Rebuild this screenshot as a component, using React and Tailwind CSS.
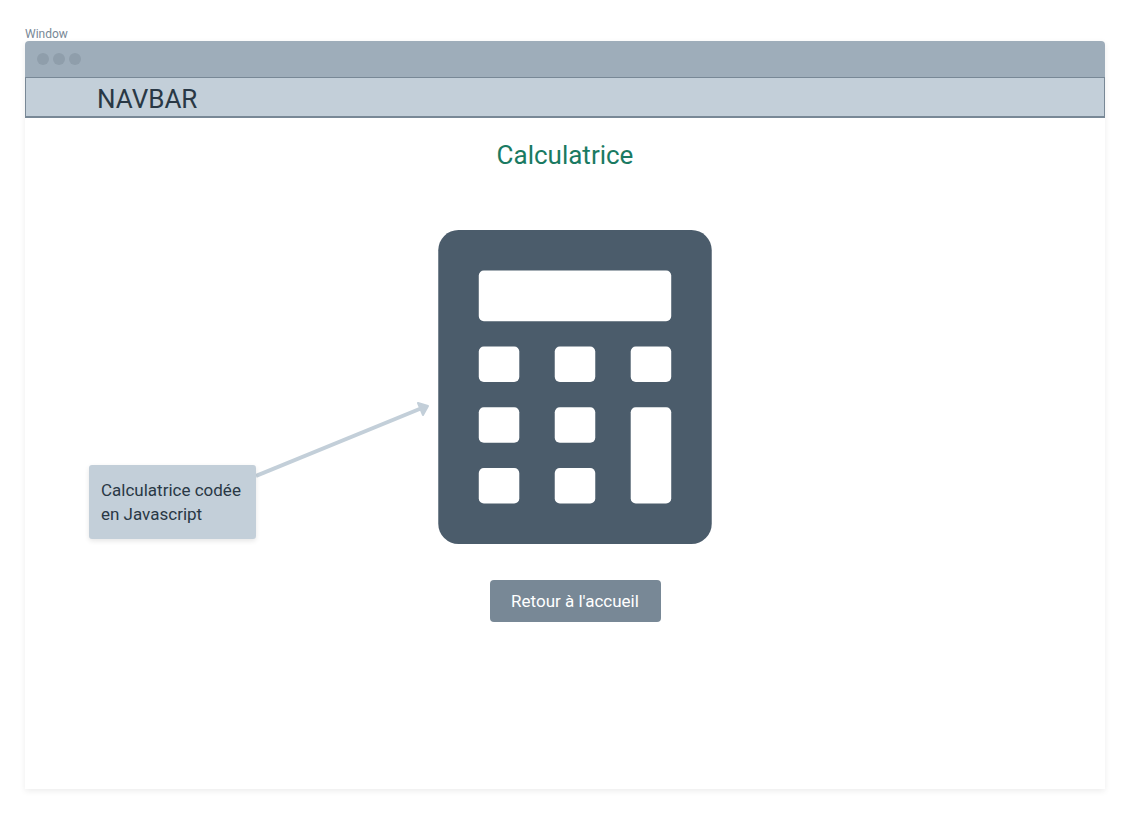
const KEYS = [
  { x: 8, y: 8, width: 38, height: 10 },
  { x: 8, y: 23, width: 8, height: 7 },
  { x: 23, y: 23, width: 8, height: 7 },
  { x: 38, y: 23, width: 8, height: 7 },
  { x: 8, y: 35, width: 8, height: 7 },
  { x: 23, y: 35, width: 8, height: 7 },
  { x: 38, y: 35, width: 8, height: 19 },
  { x: 8, y: 47, width: 8, height: 7 },
  { x: 23, y: 47, width: 8, height: 7 },
];

function CalculatorIcon() {
  return (
    <svg viewBox="0 0 54 62" className="h-[314px] w-[274px]" role="img" aria-label="Calculatrice">
      <rect width="54" height="62" rx="4" fill="#4b5c6b" />
      {KEYS.map((key) => (
        <rect key={`${key.x}-${key.y}`} {...key} rx="1" fill="#ffffff" />
      ))}
    </svg>
  );
}

function Annotation() {
  return (
    <>
      <svg
        viewBox="0 0 174 80"
        className="absolute right-full top-[170px] mr-2 h-20 w-[174px]"
        aria-hidden="true"
      >
        <path d="M0 76 L166 8" stroke="#c3cfd9" strokeWidth="4" fill="none" />
        <path
          d="M162 3 L172 6 L167 15 Z"
          fill="#c3cfd9"
          stroke="#c3cfd9"
          strokeWidth="2"
          strokeLinejoin="round"
        />
      </svg>
      <p className="absolute right-full top-[235px] mr-[182px] w-[167px] rounded-[3px] bg-[#c3cfd9] px-3 py-[13px] text-[17px] leading-6 whitespace-nowrap text-[#293845] shadow-[0_2px_5px_rgba(0,0,0,0.1)]">
        Calculatrice codée
        <br />
        en Javascript
      </p>
    </>
  );
}

export default function App() {
  return (
    <div className="flex min-h-screen flex-col bg-white px-[25px] pt-7 pb-[25px] font-[Roboto,sans-serif]">
      <div className="text-xs leading-[13px] text-[#788896]">Window</div>
      <div className="flex grow flex-col rounded-t-sm bg-white shadow-[0_2px_6px_rgba(0,0,0,0.08)]">
        <div className="flex h-9 items-center gap-1 rounded-t-sm bg-[#9eadba] px-3">
          <span className="size-3 rounded-full bg-[#8f9eab]" />
          <span className="size-3 rounded-full bg-[#8f9eab]" />
          <span className="size-3 rounded-full bg-[#8f9eab]" />
        </div>
        <nav className="flex h-[41px] items-center border border-b-2 border-[#788896] bg-[#c3cfd9] px-[71px] pt-1 text-[26px] leading-8 text-[#293845]">
          NAVBAR
        </nav>
        <main className="flex flex-col items-center pt-[21px]">
          <h1 className="text-[26px] leading-8 text-[#1a7a62]">Calculatrice</h1>
          <div className="flex flex-col items-center gap-9 pt-[59px] pl-5">
            <div className="relative">
              <CalculatorIcon />
              <Annotation />
            </div>
            <button
              type="button"
              className="h-[42px] w-[171px] rounded-sm bg-[#788896] text-[17px] leading-6 text-white"
            >
              Retour à l'accueil
            </button>
          </div>
        </main>
      </div>
    </div>
  );
}
